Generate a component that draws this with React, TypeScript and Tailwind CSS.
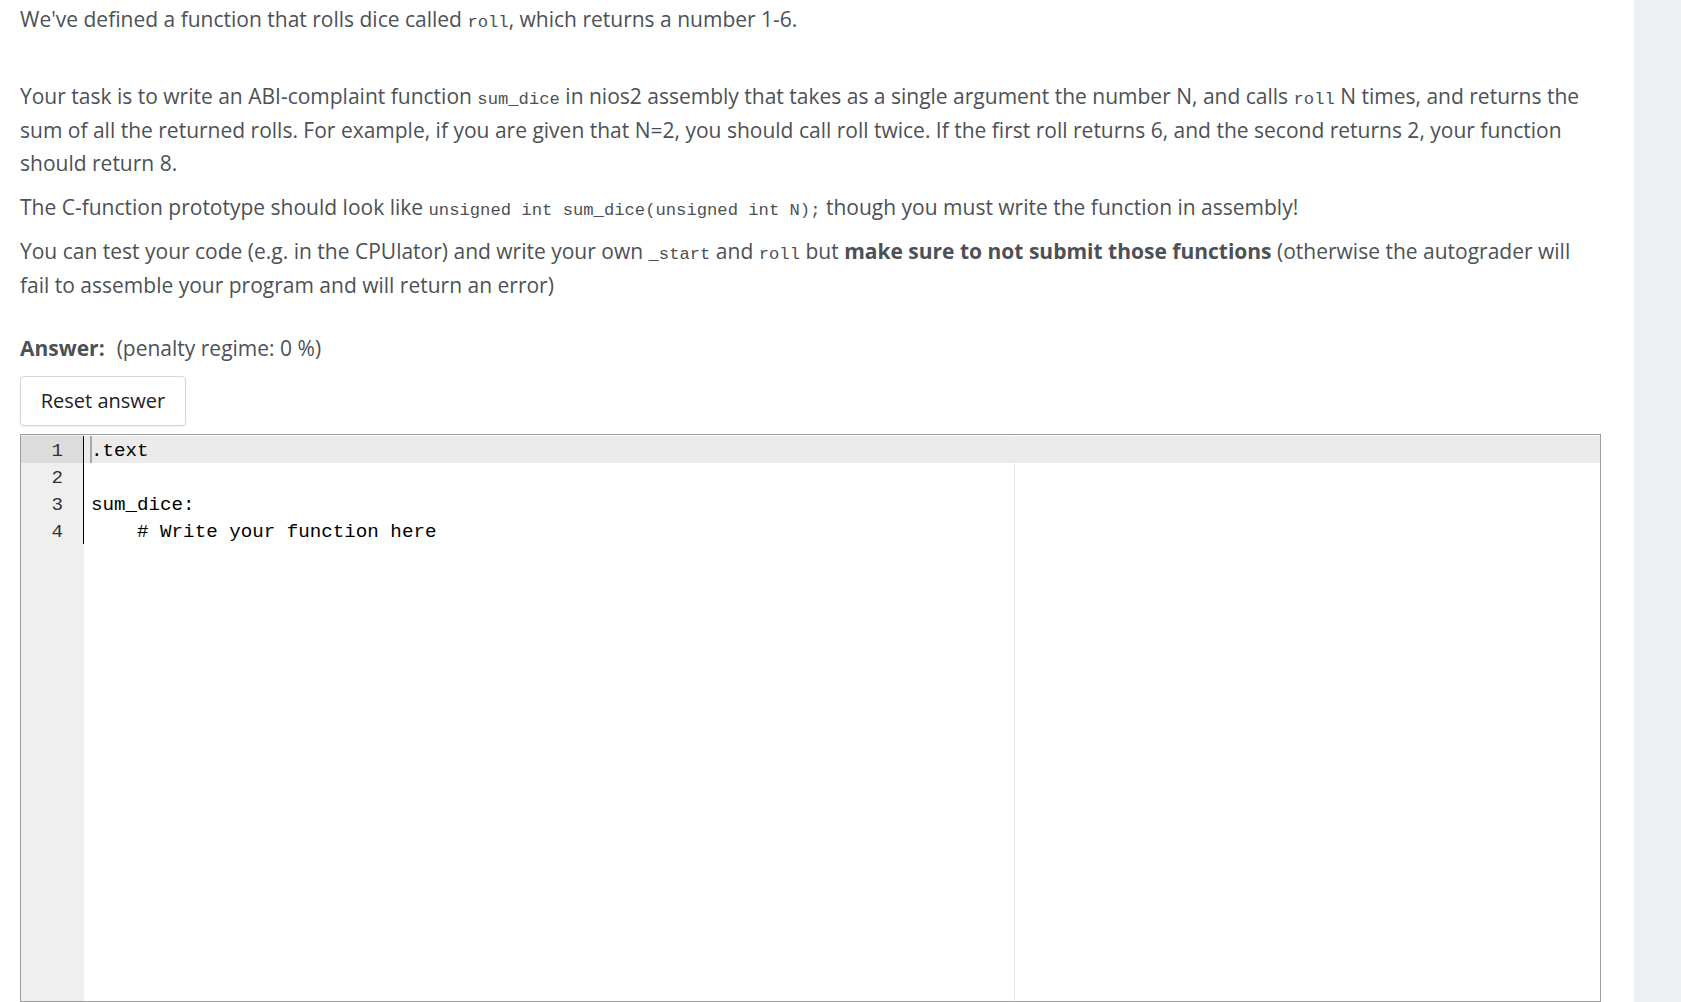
import React from 'react';

const code = ['.text', '', 'sum_dice:', '    # Write your function here'];

function Code({ children }: { children: React.ReactNode }) {
  return <code className="font-['Liberation_Mono',monospace] text-[17.2px] leading-none align-baseline">{children}</code>;
}

function Editor() {
  return (
    <div className="mt-2 mr-[33px] flex-1 flex border border-[#9c9c9c] bg-white overflow-hidden font-['Liberation_Mono','DejaVu_Sans_Mono',monospace] text-[19.2px] text-black">
      {/* gutter */}
      <div className="w-[63px] flex-shrink-0 bg-[#efefef] pt-px">
        {code.map((_, i) => (
          <div
            key={i}
            className={`h-[27px] leading-[31px] text-right pr-[20px] border-r border-black text-[#333] ${
              i === 0 ? 'bg-[#dcdcdc]' : ''
            }`}
          >
            {i + 1}
          </div>
        ))}
      </div>
      {/* text layer */}
      <div className="relative flex-1 pt-px">
        <div className="absolute top-0 bottom-0 left-[930px] w-px bg-[#e6e6e6]" />
        {code.map((line, i) => (
          <div
            key={i}
            className={`relative h-[27px] leading-[31px] pl-[7px] whitespace-pre ${i === 0 ? 'bg-[#ebebeb]' : ''}`}
          >
            {i === 0 && <span className="absolute left-[6px] top-0 h-[27px] w-[2px] bg-[#a9a9a9]" />}
            {line}
          </div>
        ))}
      </div>
    </div>
  );
}

export default function App() {
  return (
    <div className="h-screen flex overflow-hidden bg-white font-['Open_Sans',sans-serif] text-[21px] text-[#4d5156]">
      <main className="flex-1 flex flex-col pl-[20px] pt-[3px] min-w-0">
        <div className="leading-[33.3px] mr-[40px]">
          <p className="mb-[44px]">
            We've defined a function that rolls dice called <Code>roll</Code>, which returns a number 1-6.
          </p>
          <p className="mb-[11px]">
            Your task is to write an ABI-complaint function <Code>sum_dice</Code> in nios2 assembly that takes as a
            single argument the number N, and calls <Code>roll</Code> N times, and returns the sum of all the returned
            rolls. For example, if you are given that N=2, you should call roll twice. If the first roll returns 6, and
            the second returns 2, your function should return 8.
          </p>
          <p className="mb-[11px]">
            The C-function prototype should look like <Code>unsigned int sum_dice(unsigned int N);</Code> though you must
            write the function in assembly!
          </p>
          <p>
            You can test your code (e.g. in the CPUlator) and write your own <Code>_start</Code> and <Code>roll</Code>{' '}
            but <strong className="font-bold">make sure to not submit those functions</strong> (otherwise the autograder
            will fail to assemble your program and will return an error)
          </p>
        </div>

        <div className="mt-[31px] leading-[30px]">
          <span className="font-bold">Answer:</span>
          <span className="ml-[12px]">(penalty regime: 0 %)</span>
        </div>

        <div className="mt-[13px]">
          <button className="h-[50px] w-[166px] rounded-[4px] border border-[#d6d6d6] bg-white text-[20px] text-[#1d2125] shadow-[0_1px_2px_rgba(0,0,0,0.08)]">
            Reset answer
          </button>
        </div>

        <Editor />
      </main>
      <aside className="w-[47px] flex-shrink-0 bg-[#eef1f3]" />
    </div>
  );
}
